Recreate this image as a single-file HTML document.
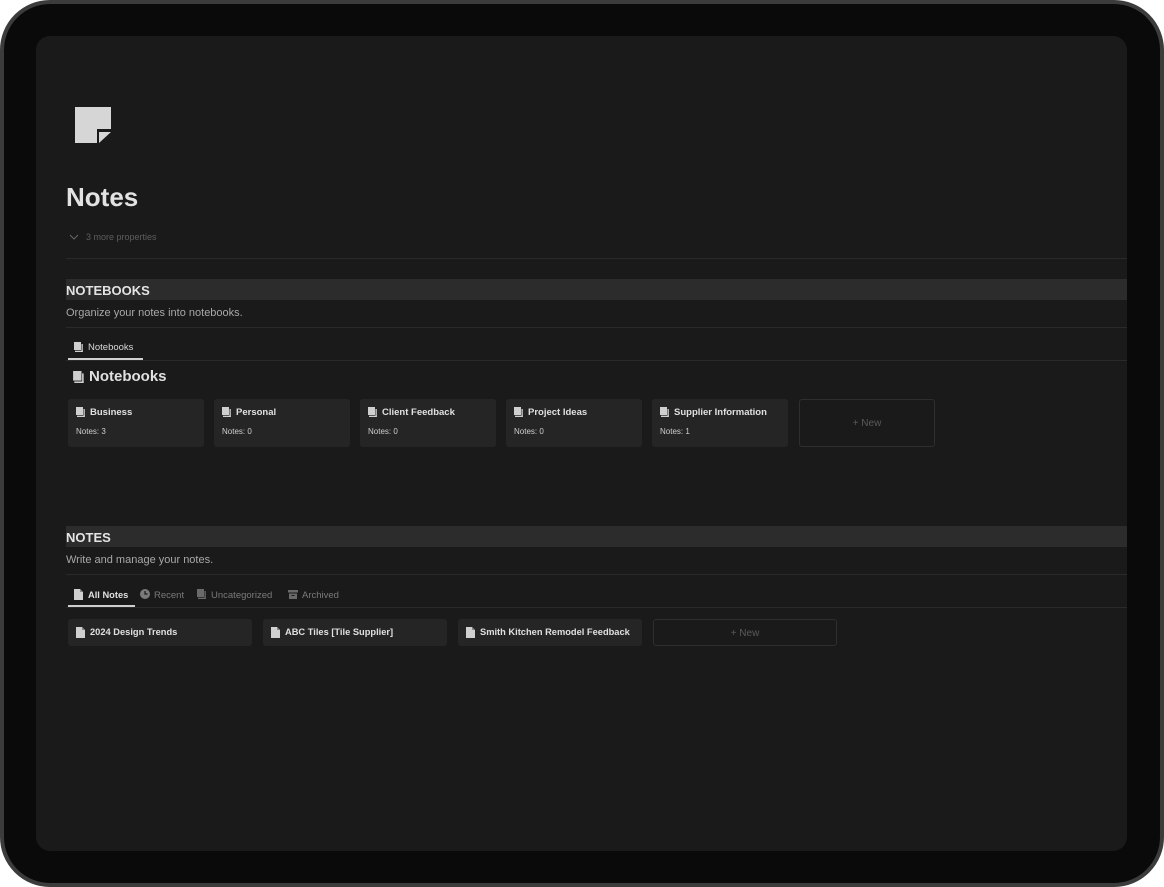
<!DOCTYPE html>
<html><head><meta charset="utf-8"><style>
*{margin:0;padding:0;box-sizing:border-box}
body{width:1164px;height:887px;background:#fff;font-family:"Liberation Sans",Arial,sans-serif;overflow:hidden;position:relative}
.dev{position:absolute;left:0;top:0;width:1164px;height:887px;border-radius:50px;background:#0a0a0a;border:4px solid #3c3c3c}
.scr{position:absolute;left:36px;top:36px;width:1091px;height:815px;border-radius:14px;background:#1a1a1a;overflow:hidden}
.a{position:absolute}
.bar{position:absolute;left:30px;right:0;height:21px;background:#2c2c2c;color:#e4e4e4;font-weight:bold;font-size:13px;padding:4px 0 0 0}
.line{position:absolute;left:30px;right:0;height:1px;background:#2a2a2a}
.card{position:absolute;background:#252525;border-radius:3px;width:136px;height:48px}
.card b{position:absolute;left:22px;top:8px;font-size:9.5px;color:#e0e0e0}
.card i{position:absolute;left:8px;top:28px;font-size:8px;color:#cfcfcf;font-style:normal}
.card .ic{left:8px;top:8px}
.ic{position:absolute;width:9px;height:10px}
.nc{position:absolute;background:#252525;border-radius:3px;width:184px;height:27px;top:583px}
.nc b{position:absolute;left:22px;top:8px;font-size:9.3px;color:#e0e0e0}
.nc svg{position:absolute;left:8px;top:8px}
.new{position:absolute;border:1px solid #2e2e2e;border-radius:3px;color:#5a5a5a;font-size:10px;text-align:center}
</style></head><body>
<div class="dev"></div>
<div class="scr">
<svg class="a" style="left:39px;top:71px" width="36" height="36" viewBox="0 0 36 36"><path d="M0 0H36V22H22V36H0Z" fill="#d6d6d6"/><path d="M24 25H36L24 36Z" fill="#d6d6d6"/></svg>
<div class="a" style="left:30px;top:146px;font-size:26px;font-weight:bold;color:#e2e2e2">Notes</div>
<svg class="a" style="left:33px;top:198px" width="10" height="6"><path d="M1 1L5 5L9 1" stroke="#666" fill="none"/></svg>
<div class="a" style="left:50px;top:196px;font-size:9px;color:#5e5e5e">3 more properties</div>
<div class="line" style="top:222px"></div>
<div class="bar" style="top:243px">NOTEBOOKS</div>
<div class="a" style="left:30px;top:271px;font-size:11px;color:#a8a8a8">Organize your notes into notebooks.</div>
<div class="line" style="top:291px"></div>
<svg class="ic" style="left:38px;top:306px" viewBox="0 0 9 10"><rect x="0" y="0" width="7" height="8" fill="#cfcfcf"/><rect x="7.5" y="2" width="1.3" height="8" fill="#cfcfcf"/><rect x="1" y="8.7" width="7.8" height="1.3" fill="#cfcfcf"/></svg>
<div class="a" style="left:52px;top:306px;font-size:9.5px;color:#d8d8d8">Notebooks</div>
<div class="a" style="left:32px;top:322px;width:75px;height:2px;background:#cfcfcf"></div>
<div class="line" style="top:324px"></div>
<svg class="a" style="left:37px;top:335px" width="11" height="12" viewBox="0 0 9 10"><rect x="0" y="0" width="7" height="8" fill="#cfcfcf"/><rect x="7.5" y="2" width="1.3" height="8" fill="#cfcfcf"/><rect x="1" y="8.7" width="7.8" height="1.3" fill="#cfcfcf"/></svg>
<div class="a" style="left:53px;top:332px;font-size:15px;font-weight:bold;color:#e0e0e0">Notebooks</div>

<div class="card" style="left:32px;top:363px"><svg class="ic" viewBox="0 0 9 10"><rect width="7" height="8" fill="#cfcfcf"/><rect x="7.5" y="2" width="1.3" height="8" fill="#cfcfcf"/><rect x="1" y="8.7" width="7.8" height="1.3" fill="#cfcfcf"/></svg><b>Business</b><i>Notes: 3</i></div>
<div class="card" style="left:178px;top:363px"><svg class="ic" viewBox="0 0 9 10"><rect width="7" height="8" fill="#cfcfcf"/><rect x="7.5" y="2" width="1.3" height="8" fill="#cfcfcf"/><rect x="1" y="8.7" width="7.8" height="1.3" fill="#cfcfcf"/></svg><b>Personal</b><i>Notes: 0</i></div>
<div class="card" style="left:324px;top:363px"><svg class="ic" viewBox="0 0 9 10"><rect width="7" height="8" fill="#cfcfcf"/><rect x="7.5" y="2" width="1.3" height="8" fill="#cfcfcf"/><rect x="1" y="8.7" width="7.8" height="1.3" fill="#cfcfcf"/></svg><b>Client Feedback</b><i>Notes: 0</i></div>
<div class="card" style="left:470px;top:363px"><svg class="ic" viewBox="0 0 9 10"><rect width="7" height="8" fill="#cfcfcf"/><rect x="7.5" y="2" width="1.3" height="8" fill="#cfcfcf"/><rect x="1" y="8.7" width="7.8" height="1.3" fill="#cfcfcf"/></svg><b>Project Ideas</b><i>Notes: 0</i></div>
<div class="card" style="left:616px;top:363px"><svg class="ic" viewBox="0 0 9 10"><rect width="7" height="8" fill="#cfcfcf"/><rect x="7.5" y="2" width="1.3" height="8" fill="#cfcfcf"/><rect x="1" y="8.7" width="7.8" height="1.3" fill="#cfcfcf"/></svg><b>Supplier Information</b><i>Notes: 1</i></div>
<div class="new" style="left:763px;top:363px;width:136px;height:48px;line-height:48px">+ New</div>

<div class="bar" style="top:490px">NOTES</div>
<div class="a" style="left:30px;top:518px;font-size:11px;color:#a8a8a8">Write and manage your notes.</div>
<div class="line" style="top:538px"></div>
<svg class="a" style="left:38px;top:553px" width="9" height="11" viewBox="0 0 9 11"><path d="M0 0H6L9 3V11H0Z" fill="#d0d0d0"/><path d="M6 0V3H9" fill="#888"/></svg>
<div class="a" style="left:52px;top:554px;font-size:9.3px;color:#e0e0e0;font-weight:bold">All Notes</div>
<svg class="a" style="left:104px;top:553px" width="10" height="10"><circle cx="5" cy="5" r="5" fill="#7a7a7a"/><path d="M5 2V5H7.5" stroke="#1a1a1a" fill="none" stroke-width="1.2"/></svg>
<div class="a" style="left:118px;top:554px;font-size:9.5px;color:#7a7a7a">Recent</div>
<svg class="a" style="left:161px;top:553px" width="9" height="10" viewBox="0 0 9 10"><rect width="7" height="8" fill="#6a6a6a"/><rect x="7.5" y="2" width="1.3" height="8" fill="#6a6a6a"/><rect x="1" y="8.7" width="7.8" height="1.3" fill="#6a6a6a"/></svg>
<div class="a" style="left:175px;top:554px;font-size:9.5px;color:#7a7a7a">Uncategorized</div>
<svg class="a" style="left:252px;top:554px" width="10" height="9"><rect width="10" height="2.5" fill="#6a6a6a"/><rect x="1" y="3.5" width="8" height="5.5" fill="#6a6a6a"/><rect x="3.5" y="5" width="3" height="1" fill="#1a1a1a"/></svg>
<div class="a" style="left:266px;top:554px;font-size:9.5px;color:#7a7a7a">Archived</div>
<div class="a" style="left:32px;top:569px;width:67px;height:2px;background:#cfcfcf"></div>
<div class="line" style="top:571px"></div>

<div class="nc" style="left:32px"><svg width="9" height="11" viewBox="0 0 9 11"><path d="M0 0H6L9 3V11H0Z" fill="#d0d0d0"/><path d="M6 0V3H9" fill="#888"/></svg><b>2024 Design Trends</b></div>
<div class="nc" style="left:227px"><svg width="9" height="11" viewBox="0 0 9 11"><path d="M0 0H6L9 3V11H0Z" fill="#d0d0d0"/><path d="M6 0V3H9" fill="#888"/></svg><b>ABC Tiles [Tile Supplier]</b></div>
<div class="nc" style="left:422px"><svg width="9" height="11" viewBox="0 0 9 11"><path d="M0 0H6L9 3V11H0Z" fill="#d0d0d0"/><path d="M6 0V3H9" fill="#888"/></svg><b>Smith Kitchen Remodel Feedback</b></div>
<div class="new" style="left:617px;top:583px;width:184px;height:27px;line-height:27px">+ New</div>
</div>
</body></html>
